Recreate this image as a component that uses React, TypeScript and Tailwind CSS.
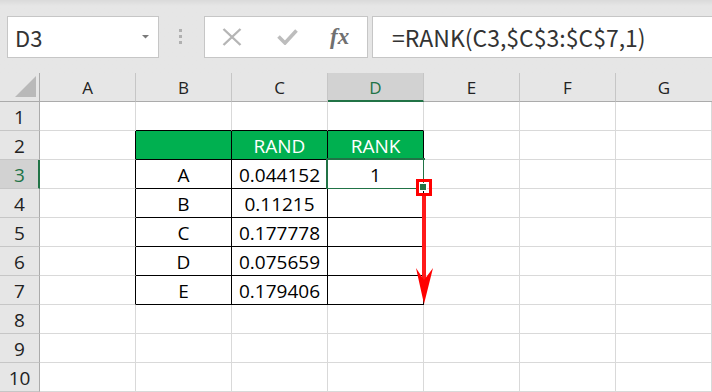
import React from "react";

const COLS = ["A", "B", "C", "D", "E", "F", "G"];
const ROWS = [1, 2, 3, 4, 5, 6, 7, 8, 9, 10];

const DATA: Record<string, string> = {
  C2: "RAND",
  D2: "RANK",
  B3: "A",
  C3: "0.044152",
  D3: "1",
  B4: "B",
  C4: "0.11215",
  B5: "C",
  C5: "0.177778",
  B6: "D",
  C6: "0.075659",
  B7: "E",
  C7: "0.179406",
};

const inTable = (c: string) => c === "B" || c === "C" || c === "D";

function Cell({ col, row }: { col: string; row: number }) {
  const key = `${col}${row}`;
  const rightBlack = (inTable(col) || col === "A") && row >= 2 && row <= 7;
  const bottomBlack = inTable(col) && row >= 1 && row <= 7;
  const green = inTable(col) && row === 2;
  const selected = key === "D3";
  const widthCls = col === "G" ? "flex-1 min-w-0" : "w-[96px] shrink-0";
  return (
    <div
      className={[
        "relative h-[29px] border-r border-b flex items-center justify-center pt-[3px] text-[19px]",
        widthCls,
        rightBlack ? "border-r-black" : "border-r-[#d9d9d9]",
        bottomBlack ? "border-b-black" : "border-b-[#d9d9d9]",
        green ? "bg-[#00b050] text-white" : "bg-white text-black",
      ].join(" ")}
    >
      <span className="leading-none">{DATA[key] ?? ""}</span>
      {selected && (
        <div className="absolute left-[-2px] top-[-2px] right-[-2px] bottom-[-2px] border-2 border-[#217346] pointer-events-none" />
      )}
    </div>
  );
}

export default function App() {
  return (
    <div
      className="w-[712px] h-[392px] overflow-hidden bg-white"
      style={{ fontFamily: '"Open Sans", "Noto Sans", sans-serif' }}
    >
      {/* Top bar */}
      <div className="h-[73px] bg-[#e6e6e6] bg-gradient-to-b from-[#dadada] via-[#e6e6e6] via-[8%] to-[#e6e6e6] flex items-start pt-[16px]">
        <div className="ml-[7px] w-[152px] h-[42px] shrink-0 bg-white border border-[#c6c6c6] flex items-center justify-between pl-[7px] pr-[9px]">
          <span
            className="text-[22px] text-[#333] leading-none"
            style={{ fontFamily: '"Noto Sans CJK JP", "Noto Sans", sans-serif' }}
          >
            D3
          </span>
          <svg width="7" height="4" viewBox="0 0 7 4">
            <polygon points="0,0 7,0 3.5,3.5" fill="#7a7a7a" />
          </svg>
        </div>
        <div className="ml-[20px] w-[3px] h-[42px] shrink-0 flex flex-col items-center pt-[13px] gap-[3px]">
          <div className="w-[3px] h-[3px] bg-[#b0b0b0]" />
          <div className="w-[3px] h-[3px] bg-[#b0b0b0]" />
          <div className="w-[3px] h-[3px] bg-[#b0b0b0]" />
        </div>
        <div className="ml-[22px] w-[164px] h-[42px] shrink-0 bg-white border border-[#c6c6c6] flex items-center">
          <svg className="ml-[17px]" width="20" height="18" viewBox="0 0 20 18">
            <path d="M1.5 1 L18.5 17 M18.5 1 L1.5 17" stroke="#b5b5b5" strokeWidth="2.4" fill="none" />
          </svg>
          <svg className="ml-[35px]" width="21" height="16" viewBox="0 0 21 16">
            <path d="M1.5 7.5 L8 14 L19.5 1.5" stroke="#bdbdbd" strokeWidth="3.6" fill="none" />
          </svg>
          <span
            className="ml-[32px] text-[23px] italic font-bold text-[#707070] leading-none -mt-[2px]"
            style={{ fontFamily: '"Liberation Serif", "DejaVu Serif", serif' }}
          >
            fx
          </span>
        </div>
        <div className="ml-[4px] flex-1 h-[42px] bg-white border border-[#c6c6c6] border-r-0 flex items-center pl-[19px]">
          <span
            className="text-[23px] text-[#333] leading-none"
            style={{ fontFamily: '"Noto Sans CJK JP", "Noto Sans", sans-serif' }}
          >
            =RANK(C3,$C$3:$C$7,1)
          </span>
        </div>
      </div>

      {/* Grid */}
      <div className="relative">
        {/* Column headers */}
        <div className="flex h-[29px]">
          <div className="relative w-[40px] shrink-0 h-[29px] bg-[#e6e6e6] border-r border-b border-r-[#ababab] border-b-[#ababab]">
            <svg className="absolute left-0 top-0" width="39" height="28" viewBox="0 0 39 28">
              <polygon points="15,24 36,24 36,3" fill="#b9b9b9" />
            </svg>
          </div>
          {COLS.map((c) => {
            const sel = c === "D";
            return (
              <div
                key={c}
                className={[
                  "h-[29px] flex items-center justify-center text-[17px] pt-[1px]",
                  c === "G" ? "flex-1 min-w-0" : "w-[96px] shrink-0 border-r border-r-[#c6c6c6]",
                  sel
                    ? "bg-[#d2d2d2] text-[#217346] border-b-2 border-b-[#217346]"
                    : "bg-[#e6e6e6] text-[#222] border-b border-b-[#ababab]",
                ].join(" ")}
              >
                <span className="leading-none">{c}</span>
              </div>
            );
          })}
        </div>

        {/* Rows */}
        {ROWS.map((r) => {
          const sel = r === 3;
          return (
            <div key={r} className="flex h-[29px]">
              <div
                className={[
                  "w-[40px] shrink-0 h-[29px] border-b border-b-[#c6c6c6] flex items-center justify-center text-[19px] pt-[2px]",
                  sel
                    ? "bg-[#d2d2d2] text-[#217346] border-r-2 border-r-[#217346] pl-[1px]"
                    : "bg-[#e6e6e6] text-[#222] border-r border-r-[#ababab]",
                ].join(" ")}
              >
                <span className="leading-none">{r}</span>
              </div>
              {COLS.map((c) => (
                <Cell key={c} col={c} row={r} />
              ))}
            </div>
          );
        })}

        {/* Annotation overlay: fill handle highlight and drag arrow */}
        <svg
          className="absolute left-0 top-0 pointer-events-none"
          width="712"
          height="319"
          viewBox="0 0 712 319"
        >
          <rect x="417.5" y="107.5" width="13" height="14" fill="none" stroke="#ff0000" strokeWidth="3" />
          <rect x="419.5" y="110.5" width="7" height="7" fill="#217346" stroke="#ffffff" strokeWidth="1" />
          <rect x="422" y="123" width="4" height="85" fill="#ff1a1a" />
          <polygon points="416,195 424,207 433,195 424,231" fill="#ff0000" />
        </svg>
      </div>
    </div>
  );
}
